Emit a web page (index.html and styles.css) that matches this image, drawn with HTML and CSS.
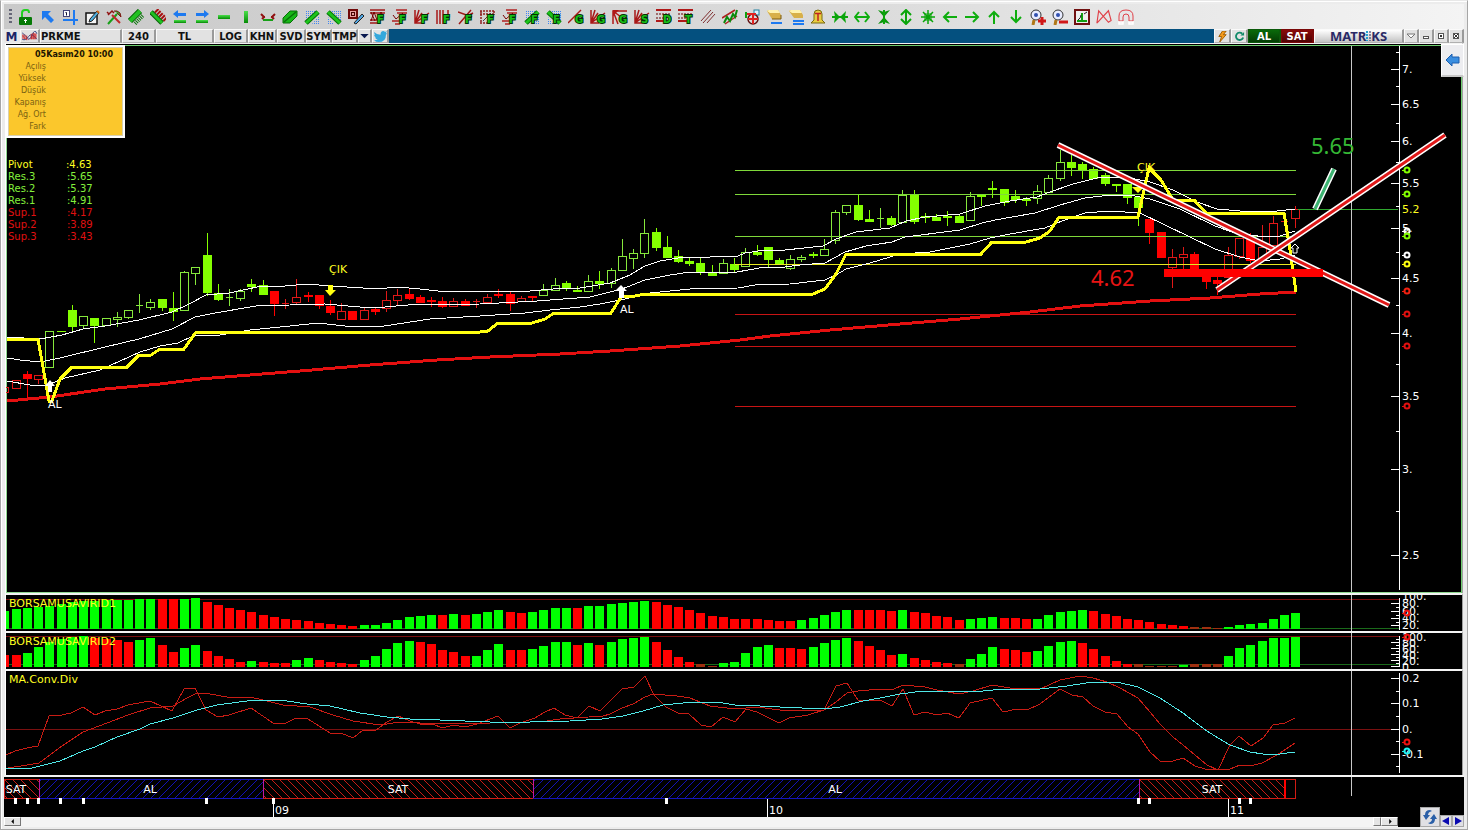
FILE: index.html
```html
<!DOCTYPE html>
<html lang="tr">
<head>
    <meta charset="UTF-8">
    <meta name="viewport" content="width=device-width, initial-scale=1.0">
    <title>PRKME - Matriks</title>
    <link rel="stylesheet" href="styles.css">
</head>
<body>

<!-- Icon shapes used by the toolbar -->
<svg class="icon-defs" aria-hidden="true">
    <defs>
        <linearGradient id="bar" x1="0" y1="0" x2="0" y2="1">
            <stop offset="0" stop-color="#4be04b"/><stop offset="1" stop-color="#058a05"/>
        </linearGradient>
        <pattern id="dots" width="2" height="2" patternUnits="userSpaceOnUse">
            <rect width="1" height="1" fill="#3f86f0" shape-rendering="crispEdges"/>
        </pattern>
    </defs>

    <symbol id="lock" viewBox="0 0 16 16"><path d="M4 8V4q0-3 3-3h2q2 0 2 3" fill="none" stroke="#1fd01f" stroke-width="2"/><rect x="1" y="8" width="13" height="8" rx="1" fill="#067a06"/><path d="M7.5 14v-4M6 11.5h3" stroke="#fff"/></symbol>
    <symbol id="pointer" viewBox="0 0 16 16"><path d="M2 2h9l-3 3 6 6-3 3-6-6-3 3z" fill="#1e7af0"/></symbol>
    <symbol id="axes" viewBox="0 0 16 16"><path d="M12 1v15M1 11h15" stroke="#1e7af0" stroke-width="2"/><rect x="1.5" y="1.5" width="6" height="6" fill="#fff" stroke="#447"/><path d="M3.5 3.5h1v3" fill="none" stroke="#113"/></symbol>
    <symbol id="note" viewBox="0 0 16 16"><rect x="2" y="4" width="11" height="11" fill="#f4f4f4" stroke="#111" stroke-width="1.5"/><path d="M5 13l1-3 7-8 2 2-7 8z" fill="#4fb0e0" stroke="#222"/><path d="M13 2l2 2" stroke="#d06010" stroke-width="2"/></symbol>
    <symbol id="tools" viewBox="0 0 16 16"><path d="M2 15L11 5" stroke="#18a018" stroke-width="2"/><path d="M6 6l8 8" stroke="#c02828" stroke-width="2"/><path d="M2 6l4-4 2 2M1 3l2 2" fill="none" stroke="#901010" stroke-width="1.5"/><path d="M8 2h3q4 1 4 6l-4-4" fill="#30b030" stroke="#801010"/></symbol>
    <symbol id="rulerUp" viewBox="0 0 16 16"><path d="M7 14.500L15.500 6" stroke="#067006" stroke-width="4" stroke-dasharray="1 1"/><path d="M2 12L12 2" stroke="#056005" stroke-width="6"/><path d="M2 12L12 2" stroke="#22c022" stroke-width="4"/></symbol>
    <symbol id="rulerDown" viewBox="0 0 16 16"><path d="M6 1l10 10" stroke="#a81010" stroke-width="5" stroke-dasharray="2 1"/><path d="M1 3l11 11" stroke="#056005" stroke-width="5"/><path d="M1 3l11 11" stroke="#22c022" stroke-width="3"/></symbol>
    <symbol id="prev" viewBox="0 0 16 16"><path d="M1 5l5-4v3h8v3H6v2z" fill="#1e7af0"/><rect x="2" y="11" width="12" height="3" fill="url(#bar)"/></symbol>
    <symbol id="next" viewBox="0 0 16 16"><path d="M15 5l-5-4v3H2v3h8v2z" fill="#1e7af0"/><rect x="2" y="11" width="12" height="3" fill="url(#bar)"/></symbol>
    <symbol id="hbar" viewBox="0 0 16 16"><rect x="2" y="6" width="12" height="4" fill="url(#bar)"/></symbol>
    <symbol id="vbar" viewBox="0 0 16 16"><rect x="6" y="2" width="4" height="12" fill="url(#bar)"/></symbol>
    <symbol id="span" viewBox="0 0 16 16"><path d="M1 5l3 3-2 2M15 5l-3 3 2 2M3 8h2M11 8h2" fill="none" stroke="#901010" stroke-width="2"/><rect x="3" y="10" width="10" height="2" fill="#18a018"/></symbol>
    <symbol id="leaf" viewBox="0 0 16 16"><path d="M1 14V9l7-7h7v5l-7 7z" fill="#18b818" stroke="#067006"/><path d="M2 13L14 3" stroke="#0a700a" stroke-width="1.5"/></symbol>
    <symbol id="diagUp" viewBox="0 0 16 16"><path d="M1 1h12L1 12z" fill="url(#dots)"/><path d="M8 15h7V7z" fill="url(#dots)"/><path d="M2 14L14 3" stroke="#067006" stroke-width="5"/><path d="M2 14L14 3" stroke="#1cc41c" stroke-width="3"/></symbol>
    <symbol id="diagDown" viewBox="0 0 16 16"><path d="M4 1h11v11z" fill="url(#dots)"/><path d="M1 7v8h7z" fill="url(#dots)"/><path d="M2 3l12 11" stroke="#067006" stroke-width="5"/><path d="M2 3l12 11" stroke="#1cc41c" stroke-width="3"/></symbol>
    <symbol id="stamp" viewBox="0 0 16 16"><rect x="1" y="1" width="8" height="8" fill="#e8a0a0" stroke="#700808" stroke-width="2"/><rect x="3.500" y="3.500" width="3" height="3" fill="none" stroke="#400"/><path d="M6 14l8-9 2 2-8 8z" fill="#4fa8e8" stroke="#222"/></symbol>
    <symbol id="zigzag" viewBox="0 0 16 16"><path d="M0 1h15M0 4h15M0 11h9M0 14h9" stroke="#a01818" stroke-width="1.500"/><path d="M1 12l3-9 3 8 4-8 2 4M1 3l4 9" fill="none" stroke="#700"/></symbol>
    <symbol id="checks" viewBox="0 0 16 16"><path d="M4 1h11M5 4h10M0 12h8M3 15h5" stroke="#b02020" stroke-width="1.500"/><path d="M1 6l3 4 7-6" fill="none" stroke="#700"/></symbol>
    <symbol id="fan" viewBox="0 0 16 16"><path d="M1 1v13h8M1 14L5 1M1 14l7-10M1 14L15 4" fill="none" stroke="#a81818" stroke-width="1.500"/></symbol>
    <symbol id="fanDown" viewBox="0 0 16 16"><path d="M1 15V2h14M1 2l5 13M1 2l12 9" fill="none" stroke="#b01818" stroke-width="1.500"/><path d="M1 1h6L1 7z" fill="#b01818"/></symbol>
    <symbol id="vlines" viewBox="0 0 16 16"><path d="M1 1v14M4 1v14M7 1v14M12 1v5" stroke="#a81818" stroke-width="1.500"/></symbol>
    <symbol id="cross" viewBox="0 0 16 16"><path d="M0 3l14 5M1 15L13 1M6 9L15 4" fill="none" stroke="#a01818" stroke-width="1.500"/></symbol>
    <symbol id="boxes" viewBox="0 0 16 16"><path d="M0 2h15M0 5h15M0 14h8M1 2v12M14 2v4" stroke="#902020" stroke-width="1.500" stroke-dasharray="2 1"/><path d="M3 12l8-8" stroke="#444"/></symbol>
    <symbol id="line" viewBox="0 0 16 16"><path d="M0 14L13 1" stroke="#a81818" stroke-width="1.500"/></symbol>
    <symbol id="rows" viewBox="0 0 16 16"><path d="M0 1h15M0 12h9" stroke="#b01818" stroke-width="2"/><path d="M0 5h15M0 9h9" stroke="#600" stroke-dasharray="2 1"/></symbol>
    <symbol id="thin" viewBox="0 0 16 16"><path d="M1 12L11 1M3 14L13 3M7 14l8-9" stroke="#803030" stroke-width="1"/></symbol>
    <symbol id="channel" viewBox="0 0 16 16"><path d="M0 9L13 1M3 15l12-8" stroke="#b02020" stroke-width="1.500"/><path d="M2 14l3-6 3 4 3-7 2 3 2-7" fill="none" stroke="#0b8a0b" stroke-width="2"/></symbol>
    <symbol id="target" viewBox="0 0 16 16"><rect x="10" y="1" width="5" height="5" fill="#d8f0ff" stroke="#2080a0"/><circle cx="9" cy="10" r="5" fill="none" stroke="#601010" stroke-width="1.500"/><path d="M2 5h10M9 4v11M4 10h10" stroke="#e02020" stroke-width="2"/><path d="M2 3v6" stroke="#10a010" stroke-width="2"/></symbol>
    <symbol id="erase1" viewBox="0 0 16 16"><path d="M1 2l2-1h9l3 5v4H6z" fill="#d8b04a"/><path d="M1 2l2-1h9l2 3H4z" fill="#fff3b0"/><path d="M6 10h9V6" fill="none" stroke="#7a5a10"/><path d="M5 14h11" stroke="#1e7af0" stroke-width="2"/></symbol>
    <symbol id="erase2" viewBox="0 0 16 16"><path d="M1 2l2-1h9l3 5v3H6z" fill="#d8b04a"/><path d="M1 2l2-1h9l2 3H4z" fill="#fff3b0"/><path d="M5 12h11M5 15h11" stroke="#1e7af0" stroke-width="2"/></symbol>
    <symbol id="bell" viewBox="0 0 16 16"><path d="M1 14l3-3V5q0-4 4-4t4 4v6l3 3z" fill="#e8cc40" stroke="#7a6a10"/><path d="M5 4.500h6M8 4v8" stroke="#c02020" stroke-width="1.500"/></symbol>
    <symbol id="inH" viewBox="0 0 16 16"><path d="M8 8L2 2l1 6-1 6zM8 8l6-6-1 6 1 6z" fill="#0aa50a"/><path d="M0 8h16" stroke="#0aa50a" stroke-width="2"/></symbol>
    <symbol id="outH" viewBox="0 0 16 16"><path d="M5 3L1 8l4 5M11 3l4 5-4 5M1 8h14" fill="none" stroke="#0fae0f" stroke-width="2"/></symbol>
    <symbol id="inV" viewBox="0 0 16 16"><path d="M8 8L2 1l6 2 6-2zM8 8l-6 7 6-2 6 2z" fill="#0a950a"/><path d="M8 1v14" stroke="#0aa50a" stroke-width="2"/></symbol>
    <symbol id="outV" viewBox="0 0 16 16"><path d="M3 6l5-5 5 5M3 10l5 5 5-5M8 1v14" fill="none" stroke="#0aa50a" stroke-width="2"/></symbol>
    <symbol id="burst" viewBox="0 0 16 16"><path d="M8 1v14M1 8h14M3 3l10 10M13 3L3 13" stroke="#0aa50a" stroke-width="1.500"/><rect x="5" y="5" width="6" height="6" fill="none" stroke="#0aa50a"/></symbol>
    <symbol id="left" viewBox="0 0 16 16"><path d="M15 8H2M7 3L2 8l5 5" fill="none" stroke="#0fae0f" stroke-width="2"/></symbol>
    <symbol id="right" viewBox="0 0 16 16"><path d="M1 8h13M9 3l5 5-5 5" fill="none" stroke="#0fae0f" stroke-width="2"/></symbol>
    <symbol id="up" viewBox="0 0 16 16"><path d="M8 15V3M3 8l5-5 5 5" fill="none" stroke="#0fae0f" stroke-width="2"/></symbol>
    <symbol id="down" viewBox="0 0 16 16"><path d="M8 1v12M3 8l5 5 5-5" fill="none" stroke="#0fae0f" stroke-width="2"/></symbol>
    <symbol id="zoomIn" viewBox="0 0 16 16"><circle cx="6" cy="6" r="5" fill="#e8ecff" stroke="#333"/><circle cx="6" cy="6" r="2" fill="#3050b0"/><path d="M4 11l-1 5" stroke="#b07818" stroke-width="3"/><path d="M8 12h8M12 8v8" stroke="#d01818" stroke-width="3"/></symbol>
    <symbol id="zoomOut" viewBox="0 0 16 16"><circle cx="6" cy="6" r="5" fill="#e8ecff" stroke="#333"/><circle cx="6" cy="6" r="2" fill="#3050b0"/><path d="M4 11l-1 5" stroke="#b07818" stroke-width="3"/><path d="M7 13h9" stroke="#d01818" stroke-width="3"/></symbol>
    <symbol id="frame" viewBox="0 0 16 16"><rect x="1" y="1" width="14" height="14" fill="#eee" stroke="#701010" stroke-width="2"/><path d="M3 12h10M8 13V4" stroke="#10a010" stroke-width="2"/><path d="M4 11q3-2 3-5M10 5l3-2" fill="none" stroke="#222"/></symbol>
    <symbol id="bowtie" viewBox="0 0 18 16"><path d="M1 15L3 1l11 13 3-2-3-11L1 15" fill="none" stroke="#e04048" stroke-width="1.300"/></symbol>
    <symbol id="magnet" viewBox="0 0 16 16"><path d="M1 12V7q0-6 7-6t7 6v5h-4V8q0-3-3-3T5 8v4z" fill="none" stroke="#e04048"/><path d="M1 13h4v2H1zM11 13h4v2h-4z" fill="none" stroke="#fff" stroke-width="1.500"/></symbol>
</svg>

<div class="window">
    <div class="toolbar" id="toolbar"><span class="grip"></span></div>

    <div class="caption">
        <button class="cell logo-m" aria-label="Matriks">M</button>
        <button class="cell wave" aria-label="Grafik">
            <svg viewBox="0 0 18 12"><path d="M1 3l3 4 4 3 5-8 4 1v6H1z" fill="#e08080"/><path d="M1 2q4 3 6 6t5-4 5-1M1 9q4 2 7-3t9 3" fill="none" stroke="#304080"/><path d="M2 4v3M4 4v5M6 5v5M11 3v6M13 2v7M15 3v6" stroke="#c02020"/></svg>
        </button>
        <input class="cell symbol" type="text" value="PRKME" aria-label="Sembol">
        <button class="cell period">240</button>
        <button class="cell currency">TL</button>
        <button class="cell log">LOG</button>
        <button class="cell mid">KHN</button>
        <button class="cell mid">SVD</button>
        <button class="cell small">SYM</button>
        <button class="cell small">TMP</button>
        <button class="cell drop" aria-label="Menü"><svg viewBox="0 0 10 6"><path d="M0 0h10L5 5z" fill="#0a1a50"/></svg></button>
        <button class="cell bird" aria-label="Twitter"><svg viewBox="0 0 14 12"><path d="M0 1q3 3 7 3 0-4 3-4 1 0 2 1l2-1-1 2 1 1-1 1q0 8-8 8-3 0-5-2 3 0 4-1-2 0-3-2h1Q0 6 0 4h1Q0 3 0 1z" fill="#35a8dc"/></svg></button>

        <button class="cell push" aria-label="Emir"><svg viewBox="0 0 12 12"><path d="M6 0h4L7 4h3l-7 8 2-6H2z" fill="#f59a1a" stroke="#9a5a00"/></svg></button>
        <button class="cell sync" aria-label="Yenile"><svg viewBox="0 0 12 12"><path d="M9 3a4 4 0 1 0 1 4" fill="none" stroke="#128a6a" stroke-width="2"/><path d="M7 5h4V1z" fill="#128a6a"/></svg></button>
        <button class="cell buy">AL</button>
        <button class="cell sell">SAT</button>
        <button class="cell brand" aria-label="Matriks">MATR<svg viewBox="0 0 5 10"><path d="M1 0v10" stroke="#25a0d0" stroke-width="2" stroke-dasharray="2 1"/><path d="M4 0v10" stroke="#1c1f60" stroke-width="1" stroke-dasharray="2 1"/></svg>KS</button>
        <button class="cell win" aria-label="Menü"><svg viewBox="0 0 10 8"><path d="M1 2h8L5 6z" fill="#fff" stroke="#777"/></svg></button>
        <button class="cell win" aria-label="Küçült"><svg viewBox="0 0 10 8"><rect x="2.500" y="4.500" width="5" height="2" fill="#fff" stroke="#555"/></svg></button>
        <button class="cell win" aria-label="Büyüt"><svg viewBox="0 0 10 8"><rect x="2.500" y="1.500" width="5" height="5" fill="#fff" stroke="#555"/><path d="M4 4h2" stroke="#333" stroke-width="2"/></svg></button>
        <button class="cell win" aria-label="Kapat"><svg viewBox="0 0 10 8"><rect x="2.500" y="1.500" width="5" height="5" fill="#fff" stroke="#555"/><path d="M3 2l4 4M7 2L3 6" stroke="#333"/></svg></button>
    </div>

    <div class="pane price">
        <svg id="price" viewBox="6 44 1456 549"></svg>

        <div class="quote">
            <strong>05Kasım20 10:00</strong>
            <ul>
                <li>Açılış</li>
                <li>Yüksek</li>
                <li>Düşük</li>
                <li>Kapanış</li>
                <li>Ağ. Ort</li>
                <li>Fark</li>
            </ul>
        </div>

        <table class="pivots">
            <tr class="pivot"><th>Pivot</th><td>:4.63</td></tr>
            <tr class="res"><th>Res.3</th><td>:5.65</td></tr>
            <tr class="res"><th>Res.2</th><td>:5.37</td></tr>
            <tr class="res"><th>Res.1</th><td>:4.91</td></tr>
            <tr class="sup"><th>Sup.1</th><td>:4.17</td></tr>
            <tr class="sup"><th>Sup.2</th><td>:3.89</td></tr>
            <tr class="sup"><th>Sup.3</th><td>:3.43</td></tr>
        </table>

        <button class="side-tab" aria-label="Paneli aç"><svg viewBox="0 0 14 12"><path d="M0 6l6-6v3h7v6H6v3z" fill="#3a8ee0" stroke="#1c5fb0"/></svg></button>
    </div>

    <div class="pane"><svg id="ind1" viewBox="6 595 1456 36"></svg></div>
    <div class="pane"><svg id="ind2" viewBox="6 633 1456 36"></svg></div>
    <div class="pane"><svg id="macd" viewBox="6 671 1456 104"></svg></div>

    <div class="strip"><svg id="signals" viewBox="4 777 1460 40"></svg></div>

    <div class="footer">
        <div class="scroll">
            <button class="arrow" aria-label="Sola kaydır"><svg viewBox="0 0 4 6"><path d="M3 0v6L0 3z"/></svg></button>
            <span class="track"></span>
            <span class="thumb"></span>
            <button class="arrow" aria-label="Sağa kaydır"><svg viewBox="0 0 4 6"><path d="M1 0v6l3-3z"/></svg></button>
        </div>
        <div class="nav">
            <button class="refresh" aria-label="Yenile"><svg viewBox="0 0 16 16"><path d="M8 1Q3 1 3 6H1l3 5 4-5H6q0-3 4-4zM8 15q5 0 5-5h2l-3-5-4 5h2q0 3-4 4z" fill="#2a5fa8"/></svg></button>
            <button class="step" aria-label="Geri"><svg viewBox="0 0 8 8"><path d="M7 0v8L0 4z" fill="#0a0ab0"/></svg></button>
            <button class="step" aria-label="İleri"><svg viewBox="0 0 8 8"><path d="M1 0v8l7-4z" fill="#0a0ab0"/></svg></button>
        </div>
    </div>
</div>

<script src="script.js"></script>
</body>
</html>
```
FILE: styles.css
```css
* {
    box-sizing: border-box;
}
body {
    margin: 0;
    background-color: #d6d6d6;
    font-family: "DejaVu Sans", Verdana, sans-serif;
    font-size: 11px;
}
button, input {
    margin: 0;
    padding: 0;
    border: none;
    background: none;
    font-family: inherit;
    color: inherit;
}
svg {
    display: block;
}
.icon-defs {
    position: absolute;
    width: 0;
    height: 0;
}
.window {
    padding: 3px 3px 2px;
    border: 1px solid #a6a6a6;
    border-top-color: #e8e8e8;
    background-color: #ececec;
    box-shadow: inset 1px 1px 0 #fff;
}

/* Toolbar */
.toolbar {
    display: flex;
    align-items: center;
    height: 25px;
    padding-left: 5px;
    background: linear-gradient(to right, #c9c9c9, #dcdcdc 60%, #f4f4f4);
}
.grip {
    width: 3px;
    height: 15px;
    margin-right: 3px;
    background: repeating-linear-gradient(#667 0 2px, transparent 2px 4px);
}
.tool {
    display: flex;
    justify-content: center;
    width: 22px;
}
.tool svg {
    width: 16px;
    height: 16px;
}
.tool text {
    font-size: 10px;
    font-weight: bold;
    stroke: #033003;
    stroke-width: 2px;
    paint-order: stroke;
    fill: #18c018;
}

/* Symbol bar */
.caption {
    display: flex;
    height: 14px;
    background-color: #04507f;
}
.cell {
    display: flex;
    align-items: center;
    justify-content: center;
    flex: none;
    height: 14px;
    padding-top: 1px;
    border: 1px solid #fafafa;
    border-right: 2px solid #9a9a9a;
    border-bottom-color: #b0b0b0;
    background-color: #e2e2e2;
    font-size: 10px;
    font-weight: bold;
    line-height: 12px;
    color: #111;
}
.logo-m {
    width: 16px;
    border-color: #e8e8e8;
    background-color: #e8e8e8;
    font-size: 12px;
    color: #1d2466;
}
.wave {
    width: 20px;
}
.wave svg {
    width: 17px;
    height: 11px;
}
.symbol {
    width: 82px;
}
.period {
    width: 34px;
}
.currency {
    width: 58px;
}
.log {
    width: 34px;
}
.mid {
    width: 29px;
}
.small {
    width: 26px;
}
.drop {
    width: 14px;
}
.drop svg {
    width: 9px;
    height: 5px;
}
.bird, .sync {
    width: 17px;
}
.bird svg, .push svg, .sync svg {
    width: 13px;
    height: 11px;
}
.push {
    width: 17px;
    margin-left: auto;
}
.buy {
    width: 33px;
    border-color: #0b5a0b;
    background: linear-gradient(#0a6a0a, #043c04);
    color: #fff;
}
.sell {
    width: 33px;
    border-color: #7a0808;
    background: linear-gradient(#8a0a0a, #4c0303);
    color: #fff;
}
.brand {
    width: 90px;
    padding: 0;
    background: linear-gradient(#fff, #c4c4c4);
    font-family: "Noto Sans", sans-serif;
    font-size: 13px;
    color: #2a2a66;
}
.brand svg {
    width: 5px;
    height: 10px;
}
.win {
    width: 15px;
    padding: 0;
}
.win svg {
    width: 10px;
    height: 8px;
}

/* Chart panes */
.pane {
    position: relative;
    margin: 0 1px;
    border-top: 2px solid #f4f4f4;
    border-left: 1px solid #fff;
    border-right: 1px solid #a0a0a0;
    background-color: #000;
}
.price {
    border-top-width: 1px;
}
.pane svg, .strip svg {
    width: 100%;
    height: auto;
}
.strip {
    border-top: 2px solid #f4f4f4;
    background-color: #000;
}
.pane text, .strip text {
    font-size: 11px;
    fill: #fff;
}
.pane text.title, .pane text.last, .pane text.exit {
    fill: #ffff20;
}
.pane text.target {
    font-family: "Noto Sans", sans-serif;
    font-size: 22px;
    fill: #35b835;
}
.pane text.stop {
    font-family: "Noto Sans", sans-serif;
    font-size: 22px;
    fill: #e81414;
}
.strip text {
    text-anchor: middle;
}
.crisp {
    shape-rendering: crispEdges;
}

.quote {
    position: absolute;
    top: 1px;
    left: 0;
    width: 119px;
    height: 93px;
    padding: 2px;
    border: 2px solid #fff;
    background-color: #fbc72c;
    box-shadow: inset 0 0 0 1px #d8d0b0;
    font-size: 8px;
    line-height: 12px;
    color: #7a6212;
}
.quote strong {
    display: block;
    padding-right: 8px;
    text-align: right;
    color: #1c1400;
}
.quote ul {
    width: 36px;
    margin: 0;
    padding: 0;
    list-style: none;
    text-align: right;
}
.quote li {
    white-space: nowrap;
}
.pivots {
    position: absolute;
    top: 115px;
    left: 2px;
    border-collapse: collapse;
    font-size: 10px;
    line-height: 12px;
}
.pivots th {
    width: 58px;
    padding: 0;
    text-align: left;
    font-weight: normal;
}
.pivots td {
    padding: 0 0 0 1px;
}
.pivots .pivot td {
    padding: 0;
}
.pivot {
    color: #ffff20;
}
.res {
    color: #84f03c;
}
.sup {
    color: #e01010;
}
.side-tab {
    position: absolute;
    top: 0;
    right: -2px;
    display: flex;
    align-items: center;
    justify-content: center;
    width: 23px;
    height: 33px;
    border: 1px solid #fff;
    border-bottom: 2px solid #c8c8c8;
    background-color: #ededf0;
}
.pane .side-tab svg {
    width: 14px;
    height: 12px;
}

/* Bottom scroll bar */
.footer {
    position: relative;
    display: flex;
    height: 10px;
    background-color: #000;
}
.scroll {
    display: flex;
    flex: 1;
    margin-right: 66px;
    background-color: #f4f4f4;
}
.track {
    flex: 1;
}
.arrow, .thumb {
    width: 17px;
    height: 9px;
    border: 1px solid #fff;
    border-right-color: #777;
    border-bottom-color: #777;
    background-color: #e4e4e4;
}
.arrow {
    display: flex;
    align-items: center;
    justify-content: center;
}
.arrow svg {
    width: 4px;
    height: 5px;
}
.thumb {
    width: 8px;
}
.nav {
    position: absolute;
    right: 0;
    bottom: 0;
    display: flex;
    align-items: flex-end;
}
.refresh, .step {
    display: flex;
    align-items: center;
    justify-content: center;
    border: 1px solid #a8a8a8;
    background-color: #e0e0e4;
}
.refresh {
    width: 20px;
    height: 20px;
}
.refresh svg {
    width: 16px;
    height: 16px;
}
.step {
    width: 12px;
    height: 12px;
}
.step svg {
    width: 8px;
    height: 8px;
}
```
FILE: script.js
```js
// Toolbar: icon name, optional letter in the corner
const tools = [
    ['lock'], ['pointer'], ['axes'], ['note'], ['tools'], ['rulerUp'], ['rulerDown'], ['prev'], ['next'],
    ['hbar'], ['vbar'], ['span'], ['leaf'], ['diagUp'], ['diagDown'], ['stamp'],
    ['zigzag', 'F'], ['checks', 'F'], ['fan', 'F'], ['vlines', 'F'], ['cross', 'F'], ['boxes', 'F'],
    ['checks', 'F'], ['diagUp', 'F'], ['diagDown', 'F'], ['line', 'G'], ['fan', 'G'], ['fanDown', 'G'],
    ['fan', 'S'], ['rows', 'D'], ['rows', 'T'], ['thin'], ['channel'], ['target'], ['erase1'], ['erase2'],
    ['bell'], ['inH'], ['outH'], ['inV'], ['outV'], ['burst'], ['left'], ['right'], ['up'], ['down'],
    ['zoomIn'], ['zoomOut'], ['frame'], ['bowtie'], ['magnet']
];
document.getElementById('toolbar').insertAdjacentHTML('beforeend', tools.map(([icon, letter]) =>
    `<button class="tool" aria-label="${icon}"><svg viewBox="0 0 16 16"><use href="#${icon}"/>` +
    (letter ? `<text x="7" y="14">${letter}</text>` : '') + '</svg></button>').join(''));

// All panes share the same x scale
const barX = i => Math.round(15.7 + 11.225 * i);
const AXIS = 1399;
const CURSOR = 1351;
const LIME = '#84ff00';
const RED = '#ff0000';

const line = (x1, y1, x2, y2, color, width = 1) =>
    `<path class="crisp" d="M${x1} ${y1}L${x2} ${y2}" stroke="${color}" stroke-width="${width}"/>`;
const hline = (x1, x2, y, color) => `<rect class="crisp" x="${x1}" y="${y}" width="${x2 - x1}" height="1" fill="${color}"/>`;
const vline = (x, y1, y2, color) => `<rect class="crisp" x="${x}" y="${y1}" width="1" height="${y2 - y1}" fill="${color}"/>`;
const poly = (points, color, width = 1) =>
    `<polyline class="crisp" points="${points}" fill="none" stroke="${color}" stroke-width="${width}"/>`;
const label = (x, y, text, cls = '') => `<text x="${x}" y="${y}" class="${cls}">${text}</text>`;
const dot = (y, color) => `<circle cx="1407" cy="${y}" r="2.5" fill="none" stroke="${color}" stroke-width="2"/>` +
    hline(1402, 1405, y, color);
const axis = (top, bottom, major, minor) =>
    vline(AXIS, top, bottom, '#fff') +
    major.map(y => hline(1391, AXIS, y, '#fff')).join('') +
    minor.map(y => hline(1396, AXIS, y, '#fff')).join('');

// Candles: body top, body bottom, wick top, wick bottom, kind (0 hollow, 1 filled, 2 doji).
// The first one is cut off by the left edge.
const candles = [
    [387,392,387,392,0],[380,388,380,388,0],[374,379,371,398,1],[375,379,375,384,0],
    [331,367,331,367,0],[331,332,331,332,1],[310,327,305,331,1],[316,325,316,328,0],[318,326,318,343,1],
    [318,325,318,325,0],[317,319,312,327,0],[310,317,310,319,0],[305,306,294,313,2],[302,307,299,310,0],
    [299,308,299,311,1],[308,312,292,321,1],[272,310,271,311,0],[267,273,267,285,0],[255,293,233,296,1],
    [293,300,284,301,1],[297,298,289,306,2],[291,298,289,301,0],[284,287,279,292,1],[285,295,280,295,1],
    [291,304,291,316,1],[303,304,299,309,2],[297,302,279,305,0],[295,297,292,302,1],[295,306,295,309,1],
    [306,313,300,315,1],[311,319,303,319,0],[311,320,311,320,1],[310,319,307,320,0],[309,312,308,315,1],
    [300,308,291,312,0],[295,300,289,305,0],[294,299,289,300,1],[297,303,295,303,1],[300,302,297,307,1],
    [301,307,297,308,1],[301,306,298,307,0],[301,306,299,306,1],[301,302,299,308,2],[297,302,294,302,0],
    [294,296,289,298,1],[294,304,292,311,1],[298,301,296,301,0],[296,298,296,301,1],
    [290,295,284,296,0],[285,290,278,290,0],[283,289,281,291,1],[290,292,286,292,1],[281,291,275,292,0],
    [281,284,271,289,1],[270,283,268,288,0],[256,270,239,270,0],[253,258,249,269,0],[233,253,219,258,0],
    [232,248,228,251,1],[247,258,236,258,1],[256,262,250,263,1],[261,264,258,266,1],[263,272,258,275,1],
    [272,276,265,276,1],[263,273,259,273,0],[264,270,258,272,1],[252,266,248,267,0],[252,255,245,256,1],
    [247,260,247,267,1],[260,264,258,264,1],[259,268,255,270,0],[257,259,255,262,0],[254,256,252,258,1],
    [249,255,239,256,0],[212,240,210,244,0],[205,212,205,215,0],[205,220,195,221,1],[219,222,210,222,1],
    [218,219,208,228,2],[218,225,216,226,1],[195,222,190,222,0],[194,222,190,224,1],[216,218,213,223,1],
    [217,221,214,221,1],[216,218,211,226,1],[216,223,214,223,1],[196,220,192,220,0],[195,197,194,206,1],
    [188,190,181,198,1],[189,203,189,206,1],[196,200,190,203,1],[199,201,197,206,1],[191,198,185,204,0],
    [178,192,175,193,0],[162,178,150,181,0],[162,168,155,176,1],[164,171,162,179,1],[169,179,167,179,1],
    [175,184,173,186,1],[184,186,184,192,1],[184,198,184,204,1],[197,208,197,226,1],
    [219,233,219,244,1],[232,258,232,258,1],[257,267,249,288,0],[254,257,247,271,0],[254,272,252,272,1],
    [272,282,272,289,1],[280,284,272,295,1],[255,277,247,277,0],[238,256,238,259,0],[236,261,233,263,1],
    [247,259,225,259,0],[223,245,216,245,0],[221,222,216,226,2],[209,218,206,228,0]
];

function candle(c, index) {
    const i = index - 1;
    const [top, bottom, high, low, kind] = c;
    const red = i < 3 || (i > 22 && i < 47) || i > 100;
    const x = barX(i);
    const color = red ? (kind === 1 ? RED : '#e01818') : (kind === 1 ? LIME : '#86e83c');
    let out = vline(x, high, top, color) + vline(x, bottom, low, color);
    if (kind === 0) {
        out += `<path class="crisp" d="M${x - 3.5} ${top + .5}h8V${bottom + .5}h-8z" fill="none" stroke="${color}"/>`;
    } else {
        const w = kind === 2 ? 7 : 9;
        out += `<rect class="crisp" x="${x - (w - 1) / 2}" y="${top}" width="${w}" height="${bottom - top}" fill="${color}"/>`;
        if (kind === 2) out += vline(x, high, low, color);
    }
    return out;
}

const bandTop = '7,337 40,339 62,335 83,329 105,326 139,320 172,312 189,304 206,295 229,293 262,286 285,286 307,284 330,286 363,288 378,289 397,287 420,289 438,291 530,291 553,289 580,288 610,283 630,275 645,266 660,261 678,258 710,257 738,256 745,253 765,250 785,250 823,246 836,239 856,232 890,228 906,221 925,217 960,214 985,206 1010,201 1037,197 1050,192 1073,184 1097,178 1117,177 1130,178 1150,182 1173,190 1197,202 1217,209 1240,211 1277,211 1295,209';
const bandMid = '7,358 20,360 40,362 60,358 105,347 139,339 172,329 195,317 215,313 256,306 290,305 325,304 360,307 385,307 408,305 480,304 537,301 590,297 622,289 645,280 670,275 690,272 737,272 765,267 785,267 800,265 825,263 845,252 866,246 892,242 905,237 960,230 982,223 995,220 1035,213 1060,205 1085,198 1110,195 1130,195 1150,199 1180,209 1215,226 1235,233 1265,237 1280,236 1295,231';
const bandLow = '7,381 30,385 40,386 50,384 65,378 100,370 140,352 160,346 178,343 195,335 220,335 250,330 290,326 318,323 345,326 378,327 397,324 430,319 480,316 525,313 550,310 580,307 600,304 625,299 650,293 690,289 738,288 755,285 790,284 825,280 836,275 846,269 870,263 900,254 930,252 970,244 990,238 1010,234 1045,228 1062,221 1085,213 1110,211 1140,213 1165,225 1190,237 1215,249 1240,257 1260,261 1280,259 1295,255';
const stopLine = '7,339 38,339 49,401 52,401 60,379 72,367 127,367 139,355 151,355 160,349 184,349 196,332 480,332 488,331 498,323 532,323 545,319 554,313 611,313 621,297 635,296 645,294 813,294 825,289 836,274 846,254 981,254 992,242 1026,242 1040,238 1050,231 1059,217 1138,217 1149,168 1152,171 1161,180 1173,200 1194,200 1206,213 1284,213 1290,250 1296,292';
const longAverage = '7,401 50,397 105,389 160,384 200,379 300,371 370,365 437,360 490,357 560,354 610,351 680,346 740,340 770,336 830,330 900,324 960,319 1030,312 1080,306 1150,301 1210,298 1260,294 1296,292';

const trend = (x1, y1, x2, y2, color) =>
    `<path d="M${x1} ${y1}L${x2} ${y2}" stroke="#fff" stroke-width="6"/>` +
    `<path d="M${x1} ${y1}L${x2} ${y2}" stroke="${color}" stroke-width="3"/>`;

document.getElementById('price').innerHTML =
    hline(6, 1462, 45, '#6fce6f') + hline(6, 1462, 592, '#8fd88f') +
    vline(6, 45, 593, '#8fd88f') + vline(1461, 45, 593, '#6fce6f') +
    candles.map(candle).join('') +
    [[170, '#7fd83a'], [194, '#7fd83a'], [236, '#7fd83a'], [264, '#e8e820'], [314, '#c81414'], [346, '#c81414'], [406, '#c81414']]
        .map(([y, c]) => hline(735, 1296, y, c)).join('') +
    hline(1298, 1398, 209, '#2fa82f') +
    poly(bandTop, '#fff') + poly(bandMid, '#fff') + poly(bandLow, '#fff') +
    poly(longAverage, '#e41010', 3) + poly(stopLine, '#ffff10', 3) +
    // buy and exit arrows
    '<path d="M50 380l5 6h-3v6h-4v-6h-3zM621 285l6 6h-3v7h-5v-7h-4z" fill="#fff"/>' +
    '<path d="M328 285h5v5h3l-6 6-5-6h3zM1132 187h12l-6 6z" fill="#ffff10"/>' +
    '<path d="M1295 244l4 4h-2v5h-4v-5h-2z" fill="#000" stroke="#fff"/>' +
    label(48, 408, 'AL') + label(620, 313, 'AL') +
    label(329, 273, 'ÇIK', 'exit') + label(1137, 171, 'ÇIK', 'exit') +
    vline(CURSOR, 46, 592, '#c8c8c8') +
    axis(46, 590, [69, 104, 141, 183, 228, 278, 333, 396, 469, 555], [52, 86, 123, 162, 206, 252, 305, 364, 431, 511]) +
    [[69, '7.'], [104, '6.5'], [141, '6.'], [183, '5.5'], [228, '5.'], [278, '4.5'], [333, '4.'], [396, '3.5'], [469, '3.'], [555, '2.5']]
        .map(([y, t]) => label(1402, y + 4, t)).join('') +
    label(1402, 213, '5.2', 'last') +
    [[170, LIME], [194, LIME], [231, '#fff'], [236, LIME], [255, '#fff'], [264, '#ffff10'], [291, '#f02010'], [314, '#e01010'], [346, '#e01010'], [406, '#e01010']]
        .map(([y, c]) => dot(y, c)).join('') +
    trend(1058, 145, 1389, 305, '#e01818') +
    trend(1217, 290, 1445, 135, '#e01818') +
    trend(1315, 209, 1334, 169, '#3cb371') +
    '<rect x="1164" y="269" width="159" height="8" fill="#ff0000"/>' +
    label(1311, 154, '5.65', 'target') + label(1091, 286, '4.62', 'stop');

// Histograms: positive values are drawn green, negative ones red
const ind1 = [
    54,60,63,67,70,76,80,83,85,86,87,87,90,90,-90,-90,90,93,-81,-72,-63,-57,-51,-42,-36,-30,-27,-24,-18,-15,
    -12,-9,12,12,18,27,36,39,42,-42,45,-42,45,51,57,-51,-48,51,57,63,63,-63,69,69,75,78,81,84,-81,-72,
    -66,-57,-48,-39,-36,-30,-30,-30,-27,-24,-24,27,33,42,51,57,-57,-57,-57,-54,57,-51,-48,-39,-36,-27,30,33,36,-33,
    -33,-30,30,42,51,54,57,-54,-45,-39,-30,-27,-21,-15,-12,-9,-6,-6,-3,6,12,15,18,30,42,48
];
const ind2 = [
    -36,-36,42,60,75,84,90,93,-87,-84,-81,-75,81,87,-66,-45,57,66,-48,-33,-24,-15,18,-15,-12,-12,21,27,-21,-15,
    -12,-9,21,33,54,72,78,-75,-69,-51,-45,-33,33,51,69,-51,-51,54,63,75,75,-66,72,-66,75,84,87,90,-75,-51,
    -30,-15,-8,-3,12,15,42,60,66,-57,-57,-54,60,72,81,87,-78,-63,-51,-36,39,-27,-21,-15,-12,-8,24,39,60,-54,
    -51,-45,48,63,75,78,-72,-54,-33,-18,-9,-8,-3,-3,-3,6,-8,-8,-8,33,57,66,78,87,87,90
];
const bars = (values, base) => values.map((v, n) => {
    const h = Math.round(Math.abs(v) / 3);
    const faint = Math.abs(v) < 9;
    const color = v > 0 ? '#00ff00' : (faint ? '#a03010' : '#ff0000');
    return `<rect class="crisp" x="${barX(n - 1) - 4}" y="${base - h}" width="9" height="${h}" fill="${color}"/>`;
}).join('');

document.getElementById('ind1').innerHTML =
    hline(6, AXIS, 599, '#7a1010') + hline(6, AXIS, 628, '#1a6a1a') + bars(ind1, 629) +
    vline(CURSOR, 595, 631, '#c8c8c8') +
    axis(598, 630, [603, 611, 618, 625], [607, 615, 622]) +
    [[600, '100.'], [607, '80.'], [615, '60.'], [622, '40.'], [629, '20.']].map(([y, t]) => label(1402, y, t)).join('') +
    dot(613, '#f01010') + label(9, 607, 'BORSAMUSAVIRID1', 'title');

document.getElementById('ind2').innerHTML =
    hline(6, AXIS, 636, '#7a1010') + hline(6, AXIS, 664, '#1a6a1a') + bars(ind2, 667) +
    vline(CURSOR, 633, 669, '#c8c8c8') +
    axis(636, 667, [642, 648, 654, 660, 666], [639, 645, 651, 657, 663]) +
    [[641, '100.'], [647, '80.'], [653, '60.'], [659, '40.'], [665, '20.'], [671, '0.']].map(([y, t]) => label(1402, y, t)).join('') +
    dot(637, '#f01010') + label(9, 645, 'BORSAMUSAVIRID2', 'title');

const momentum = '6,755 15,751 27,748 38,746 49,716 62,715 71,713 83,707 95,715 105,711 117,709 128,705 150,701 172,711 184,689 195,688 206,710 218,717 229,715 251,708 273,723 286,723 296,718 308,719 330,733 341,733 353,738 363,730 375,731 387,722 398,716 410,721 420,724 432,724 443,728 453,725 465,727 477,724 498,716 510,728 520,723 535,718 543,713 554,708 565,715 577,718 589,706 600,711 622,689 634,687 645,676 654,695 666,707 678,713 689,714 701,725 711,727 723,717 735,722 746,709 757,712 779,723 789,718 808,715 824,710 836,686 847,683 858,700 880,700 892,706 903,689 914,715 925,712 937,715 947,713 959,718 970,703 992,698 1003,712 1017,709 1027,710 1040,704 1060,689 1072,695 1083,697 1093,706 1105,712 1117,714 1128,727 1138,734 1150,752 1160,761 1173,761 1183,758 1195,766 1205,769 1218,770 1230,745 1239,736 1251,746 1263,738 1273,725 1285,723 1295,718';
const macd = '8,768 27,765 39,763 62,746 83,732 107,723 128,715 150,708 162,707 173,706 187,698 197,693 210,694 227,697 250,697 263,700 283,705 310,707 333,715 353,721 380,725 400,722 420,723 450,723 490,723 530,722 547,721 560,719 603,716 610,714 622,708 633,704 645,697 653,694 677,696 690,698 710,706 735,709 757,707 780,710 810,711 824,710 836,702 847,693 858,691 880,689 892,690 903,685 925,687 937,690 959,694 973,691 992,685 1010,688 1040,689 1060,680 1080,676 1093,678 1107,682 1120,688 1138,698 1150,712 1160,724 1173,737 1183,745 1195,755 1207,765 1218,770 1230,769 1240,765 1250,766 1262,763 1277,755 1295,743';
const signal = '6,769 32,768 60,761 83,751 95,747 117,737 140,729 150,724 173,718 197,710 217,705 247,701 263,700 287,701 307,704 330,706 360,713 387,717 410,719 440,720 490,722 530,722 570,721 602,719 623,716 643,711 663,705 683,703 703,702 723,703 735,705 760,706 780,707 824,709 840,707 863,701 880,698 900,694 923,691 983,691 1003,689 1040,689 1067,686 1093,682 1117,682 1138,687 1160,698 1183,713 1207,731 1218,738 1230,745 1250,752 1263,754 1280,754 1295,752';

document.getElementById('macd').innerHTML =
    hline(6, AXIS, 729, '#7a1010') +
    poly(momentum, '#c81c14') + poly(macd, '#c81c14') + poly(signal, '#50e8e8') +
    vline(CURSOR, 671, 775, '#c8c8c8') +
    axis(673, 773, [678, 703, 729, 754], [691, 716, 741, 766]) +
    label(1402, 682, '0.2') + label(1402, 707, '0.1') + label(1402, 733, '0.') + label(1402, 758, '-0.1') +
    dot(742, '#f01010') + dot(751, '#20f0f0') +
    label(9, 683, 'MA.Conv.Div', 'title');

// Signal periods: start, end, label, label centre
const periods = [
    [4, 39, 'SAT', 16], [39, 263, 'AL', 150], [263, 533, 'SAT', 398], [533, 1139, 'AL', 835], [1139, 1285, 'SAT', 1212]
];
const ticks = [15, 27, 38, 60, 83, 206, 666, 1138, 1149, 1239, 1250];
const months = [[273, '09'], [767, '10'], [1228, '11']];

// Diagonal hatching, clipped to each period
function hatch(a, b, sell, n) {
    let d = '';
    for (let x = a - 16; x < b; x += 8) {
        d += sell ? `M${x} 779l19 19` : `M${x} 798l19-19`;
    }
    return `<clipPath id="period${n}"><rect x="${a}" y="779" width="${b - a}" height="19"/></clipPath>` +
        `<path class="crisp" d="${d}" clip-path="url(#period${n})" stroke="${sell ? '#c81c14' : '#1212b4'}"/>`;
}

document.getElementById('signals').innerHTML =
    periods.map(([a, b, text, mid], n) => {
        const sell = text === 'SAT';
        return hatch(a, b, sell, n) +
            `<rect class="crisp" x="${a}" y="779" width="${b - a}" height="19" fill="none" stroke="${sell ? '#d01c14' : '#1414b8'}"/>` +
            label(mid, 793, text);
    }).join('') +
    '<rect class="crisp" x="1285" y="779" width="10" height="19" fill="none" stroke="#d01c14"/>' +
    line(1285, 779, 1285, 798, '#ff0000', 2) +
    [39, 263, 533, 1139].map(x => vline(x, 779, 798, '#c018a0')).join('') +
    ticks.map(x => `<rect x="${x - 1}" y="798" width="3" height="6" fill="#fff"/>`).join('') +
    '<rect class="crisp" x="272" y="798" width="2" height="5" fill="none" stroke="#fff"/>' +
    months.map(([x, t]) => vline(x, 799, 817, '#fff') + label(x + 9, 814, t)).join('') +
    vline(CURSOR, 777, 796, '#c8c8c8');
```
